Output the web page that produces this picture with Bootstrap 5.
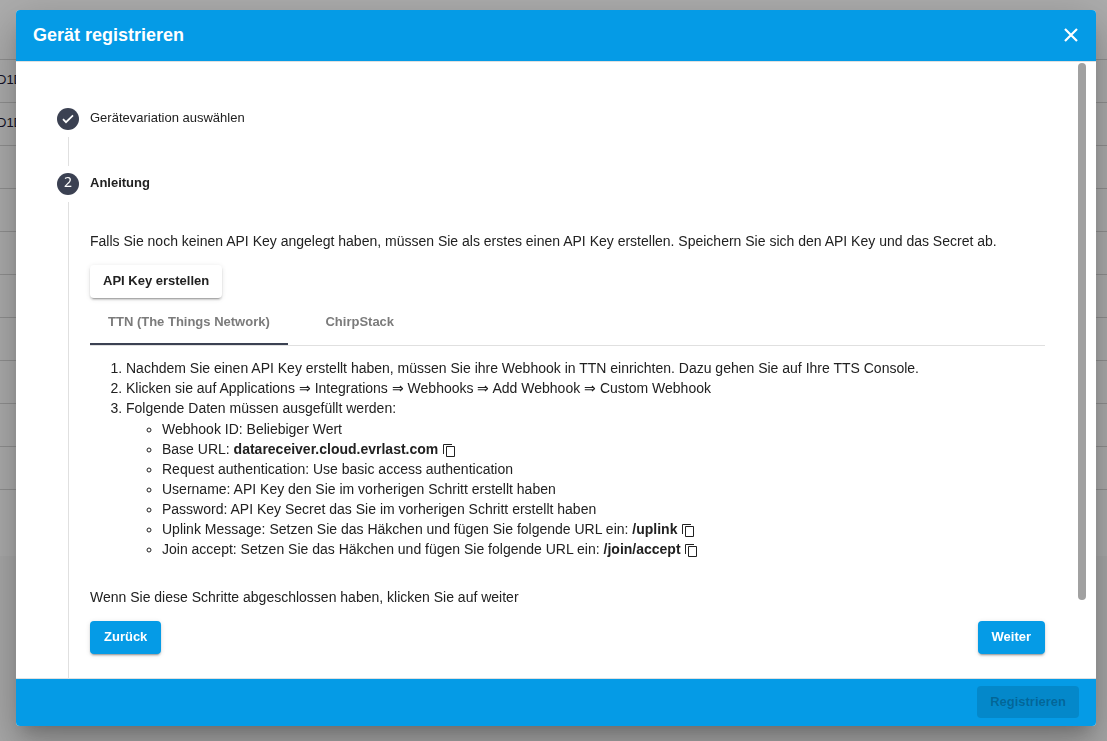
<!DOCTYPE html>
<html lang="de">
<head>
<meta charset="utf-8">
<meta name="viewport" content="width=device-width, initial-scale=1">
<title>Gerät registrieren</title>
<link href="https://cdn.jsdelivr.net/npm/bootstrap@5.3.0/dist/css/bootstrap.min.css" rel="stylesheet">
<style>
:root { --brand: #059be6; --ink: #212121; --slate: #3b4152; --rule: #e0e0e0; }
body { font-family: "Liberation Sans", Arial, sans-serif; font-size: 14px; line-height: 20px; color: var(--ink); background: #fafafa; }
.device-page { position: fixed; inset: 0; overflow: hidden; }
.device-table { width: 100%; background: #fff; border-collapse: collapse; font-size: 13px; color: #1c1a38; }
.device-table th, .device-table td { height: 43px; padding: 0 0 2px; border-bottom: 1px solid #d6d6d6; }
.device-table th { height: 59px; }
.device-table tr:last-child td { height: 67px; border: 0; }
.device-table a { color: inherit; text-decoration: none; margin-left: -3px; }
.scrim { position: fixed; inset: 0; background: rgba(0,0,0,.32); }
.modal-shell { height: 100vh; padding: 10px 11px 15px 16px; }
.dialog-box { border: 0; border-radius: 4px; height: 100%; overflow: hidden; color: var(--ink); background: #fff;
  box-shadow: 0 11px 15px -7px rgba(0,0,0,.2), 0 24px 38px 3px rgba(0,0,0,.14), 0 9px 46px 8px rgba(0,0,0,.12); }
.dialog-box .modal-header { background: var(--brand); color: #fff; padding: 0 16px 1px 17px; height: 51px; border: 0; border-radius: 0; }
.modal-title { font-size: 18px; line-height: 24px; font-weight: 700; }
.close-x { border: 0; background: none; color: #fff; padding: 0; line-height: 1; }
.close-x svg, .copy svg { display: block; }
.dialog-box .modal-body { border-top: 1px solid var(--rule); border-bottom: 1px solid var(--rule); padding: 46px 51px 0 41px; min-height: 0; overflow: hidden; }
.scroll-thumb { right: 10px; top: 1px; width: 8px; height: 537px; border-radius: 4px; background: #a1a1a1; }
.dialog-box .modal-footer { background: var(--brand); border: 0; border-radius: 0; height: 47px; padding: 0 17px 1px; }
.dialog-box .modal-footer > * { margin: 0; }
.step-row { gap: 11px; }
.step-dot { width: 22px; height: 22px; border-radius: 50%; background: var(--slate); color: #fff; font: 14px/18px "Noto Sans", sans-serif; flex: none; }
.step-name { font-size: 13px; line-height: 20px; }
.step-rail { width: 1px; margin-left: 11px; background: var(--rule); flex: none; }
.rail-short { height: 29px; margin-top: 7px; margin-bottom: 7px; }
.step-detail { margin-top: 7px; }
.step-content { margin-left: 21px; padding-top: 29px; }
.act { font-size: 13px; line-height: 20px; font-weight: 700; padding: 6px 14px 7px; border: 0; border-radius: 4px; color: #fff; background: var(--brand);
  box-shadow: 0 3px 1px -2px rgba(0,0,0,.2), 0 2px 2px rgba(0,0,0,.14), 0 1px 5px rgba(0,0,0,.12); }
.act-plain { background: #fff; color: var(--ink); padding-left: 13px; padding-right: 13px; }
.act:disabled { background: rgba(0,0,0,.12); color: rgba(0,0,0,.26); box-shadow: none; padding: 6px 13px; }
.key-btn { margin-top: 14px; }
.tab-strip { border-bottom: 1px solid var(--rule); height: 47px; margin-top: 1px; }
.tab-strip .nav-link { background: none; font-size: 13px; line-height: 20px; font-weight: 700; color: #7b7b7b; height: 46px; padding: 2px 18px 0; border: 0; border-radius: 0; border-bottom: 2px solid transparent; }
.tab-strip .nav-link.active { border-bottom-color: var(--slate); }
.tab-two { min-width: 144px; }
.guide { padding-left: 36px; margin: 12px 0 28px; }
.guide ul { padding-left: 36px; margin: 1px 0 0; }
.copy { border: 0; background: none; padding: 0; color: inherit; line-height: 1; vertical-align: -3px; }
.done-note { margin: 0 0 14px; }
</style>
</head>
<body>
<div class="device-page" aria-hidden="true">
  <table class="device-table">
    <thead><tr><th></th></tr></thead>
    <tbody>
      <tr><td><a href="#" tabindex="-1">D1D</a></td></tr>
      <tr><td><a href="#" tabindex="-1">D1D</a></td></tr>
      <tr><td></td></tr><tr><td></td></tr><tr><td></td></tr><tr><td></td></tr>
      <tr><td></td></tr><tr><td></td></tr><tr><td></td></tr><tr><td></td></tr>
      <tr><td></td></tr>
    </tbody>
  </table>
</div>
<div class="scrim"></div>
<div class="modal-shell position-relative">
  <div class="modal-content dialog-box d-flex flex-column" role="dialog" aria-modal="true" aria-labelledby="dlgTitle">
    <div class="modal-header d-flex align-items-center justify-content-between">
      <h1 class="modal-title" id="dlgTitle">Gerät registrieren</h1>
      <button type="button" class="close-x" aria-label="Schließen">
        <svg width="18" height="18" viewBox="0 0 18 18" fill="none" stroke="currentColor" stroke-width="2.2"><path d="M3 3l12 12M15 3L3 15"/></svg>
      </button>
    </div>
    <div class="modal-body d-flex flex-column flex-grow-1">
      <div class="step-row d-flex">
        <span class="step-dot d-flex align-items-center justify-content-center"><svg width="12" height="10" viewBox="0 0 12 10" fill="none" stroke="currentColor" stroke-width="1.7"><path d="M1 5.2l3 3L11 1.4"/></svg></span>
        <span class="step-name">Gerätevariation auswählen</span>
      </div>
      <div class="step-rail rail-short"></div>
      <div class="step-row d-flex">
        <span class="step-dot text-center">2</span>
        <span class="step-name fw-bold">Anleitung</span>
      </div>
      <div class="step-detail d-flex flex-grow-1">
        <div class="step-rail"></div>
        <div class="step-content flex-grow-1">
          <p class="mb-0">Falls Sie noch keinen API Key angelegt haben, müssen Sie als erstes einen API Key erstellen. Speichern Sie sich den API Key und das Secret ab.</p>
          <button type="button" class="act act-plain d-block key-btn">API Key erstellen</button>
          <div class="nav tab-strip" role="tablist">
            <button type="button" class="nav-link active" role="tab" aria-selected="true">TTN (The Things Network)</button>
            <button type="button" class="nav-link tab-two" role="tab" aria-selected="false">ChirpStack</button>
          </div>
          <ol class="guide">
            <li>Nachdem Sie einen API Key erstellt haben, müssen Sie ihre Webhook in TTN einrichten. Dazu gehen Sie auf Ihre TTS Console.</li>
            <li>Klicken sie auf Applications ⇒ Integrations ⇒ Webhooks ⇒ Add Webhook ⇒ Custom Webhook</li>
            <li>Folgende Daten müssen ausgefüllt werden:
              <ul>
                <li>Webhook ID: Beliebiger Wert</li>
                <li>Base URL: <b>datareceiver.cloud.evrlast.com</b> <button type="button" class="copy" aria-label="Base URL kopieren"><svg width="13" height="14" viewBox="0 0 13 14" fill="none" stroke="currentColor"><path d="M1.5 11V1.5H10" stroke-width="1"/><path d="M4.5 3.5h8v10h-8z" stroke-width="1"/></svg></button></li>
                <li>Request authentication: Use basic access authentication</li>
                <li>Username: API Key den Sie im vorherigen Schritt erstellt haben</li>
                <li>Password: API Key Secret das Sie im vorherigen Schritt erstellt haben</li>
                <li>Uplink Message: Setzen Sie das Häkchen und fügen Sie folgende URL ein: <b>/uplink</b> <button type="button" class="copy" aria-label="Uplink-Pfad kopieren"><svg width="13" height="14" viewBox="0 0 13 14" fill="none" stroke="currentColor"><path d="M1.5 11V1.5H10" stroke-width="1"/><path d="M4.5 3.5h8v10h-8z" stroke-width="1"/></svg></button></li>
                <li>Join accept: Setzen Sie das Häkchen und fügen Sie folgende URL ein: <b>/join/accept</b> <button type="button" class="copy" aria-label="Join-Pfad kopieren"><svg width="13" height="14" viewBox="0 0 13 14" fill="none" stroke="currentColor"><path d="M1.5 11V1.5H10" stroke-width="1"/><path d="M4.5 3.5h8v10h-8z" stroke-width="1"/></svg></button></li>
              </ul>
            </li>
          </ol>
          <p class="done-note">Wenn Sie diese Schritte abgeschlossen haben, klicken Sie auf weiter</p>
          <div class="d-flex justify-content-between">
            <button type="button" class="act">Zurück</button>
            <button type="button" class="act">Weiter</button>
          </div>
        </div>
      </div>
      <div class="scroll-thumb position-absolute"></div>
    </div>
    <div class="modal-footer d-flex align-items-center justify-content-end">
      <button type="button" class="act" disabled>Registrieren</button>
    </div>
  </div>
</div>
<script src="https://cdn.jsdelivr.net/npm/bootstrap@5.3.0/dist/js/bootstrap.bundle.min.js"></script>
</body>
</html>
